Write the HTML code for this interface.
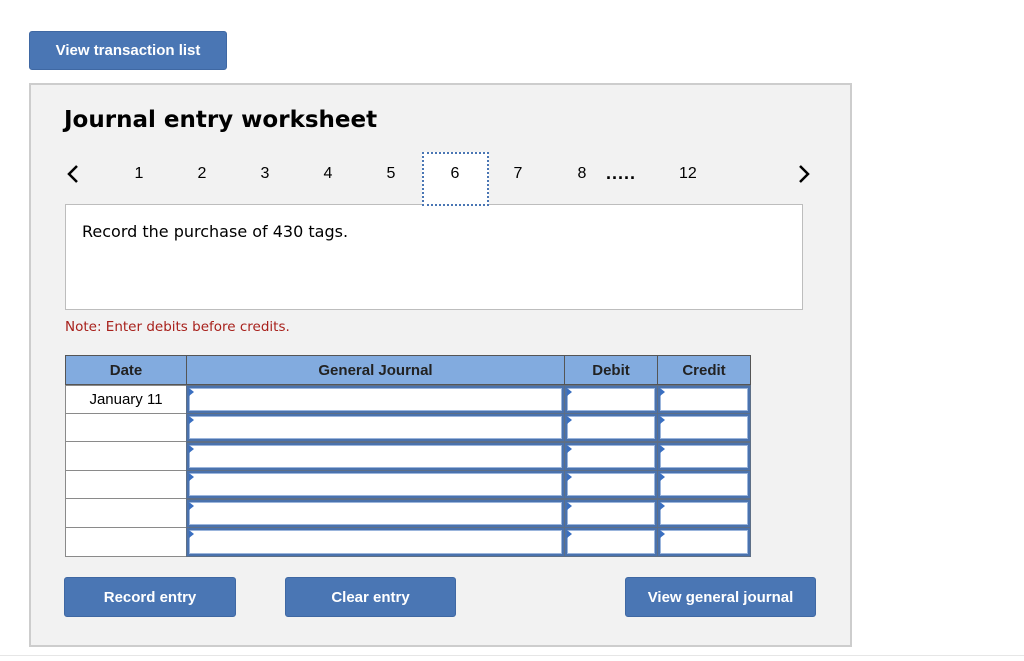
<!DOCTYPE html>
<html><head><meta charset="utf-8"><style>
*{box-sizing:border-box;margin:0;padding:0}
body{width:1024px;height:661px;background:#fff;position:relative;overflow:hidden;font-family:"Liberation Sans",Arial,sans-serif;color:#000}
.a{position:absolute}
.btn{position:absolute;background:#4a76b4;color:#fff;font-weight:bold;font-size:15px;border-radius:3px;display:flex;align-items:center;justify-content:center;border:1px solid #3f68a3}
.num{position:absolute;top:165px;font-size:16px;width:20px;text-align:center}
.dc{position:absolute;left:65px;width:122px;background:#fff;border:1px solid #8a8a8a;font-size:15px;display:flex;align-items:center;justify-content:center}
.ic{position:absolute;background:#fff;border:2px solid #4a72ad;box-shadow:inset 0 0 0 1px #9bb5dc}
.ic:before{content:"";position:absolute;left:0;top:0;border-left:5px solid #3a6fc0;border-top:4px solid transparent;border-bottom:4px solid transparent}
.hd{position:absolute;top:355px;height:30px;background:#82abdf;font-weight:bold;font-size:15px;display:flex;align-items:center;justify-content:center;border:1px solid #555;color:#222}
</style></head><body>
<div class="btn" style="left:29px;top:31px;width:198px;height:39px">View transaction list</div>
<div class="a" style="left:29px;top:83px;width:823px;height:564px;background:#f2f2f2;border:2px solid #cdcdcd"></div>
<div class="a" style="left:0;top:655px;width:1024px;height:1px;background:#e6e6e6"></div>
<div class="a" style="left:64px;top:107px;font-family:'DejaVu Sans',Verdana,sans-serif;font-weight:bold;font-size:23px">Journal entry worksheet</div>
<svg class="a" style="left:66px;top:164px" width="14" height="20"><path d="M11 2 L3 10 L11 18" stroke="#000" stroke-width="2.5" fill="none"/></svg>
<svg class="a" style="left:797px;top:164px" width="14" height="20"><path d="M3 2 L11 10 L3 18" stroke="#000" stroke-width="2.5" fill="none"/></svg>
<div class="a" style="left:65px;top:204px;width:738px;height:106px;background:#fff;border:1px solid #bdbdbd"></div>
<div class="a" style="left:422px;top:152px;width:67px;height:54px;background:#fff;border:2px dotted #4a76b4"></div>
<div class="num" style="left:129px">1</div>
<div class="num" style="left:192px">2</div>
<div class="num" style="left:255px">3</div>
<div class="num" style="left:318px">4</div>
<div class="num" style="left:381px">5</div>
<div class="num" style="left:445px">6</div>
<div class="num" style="left:508px">7</div>
<div class="num" style="left:572px">8</div>
<div class="a" style="left:606px;top:163px;font-size:18px;font-weight:bold;letter-spacing:1px">.....</div>
<div class="a" style="left:679px;top:165px;font-size:16px">12</div>
<div class="a" style="left:82px;top:222px;font-family:'DejaVu Sans',Verdana,sans-serif;font-size:16px">Record the purchase of 430 tags.</div>
<div class="a" style="left:65px;top:319px;font-family:'DejaVu Sans',Verdana,sans-serif;font-size:13.5px;color:#a8211c">Note: Enter debits before credits.</div>
<div class="hd" style="left:65px;width:122px">Date</div>
<div class="hd" style="left:186px;width:379px">General Journal</div>
<div class="hd" style="left:564px;width:94px">Debit</div>
<div class="hd" style="left:657px;width:94px">Credit</div>
<div class="dc" style="top:385px;height:29px">January 11</div>
<div class="dc" style="top:413px;height:29px"></div>
<div class="dc" style="top:441px;height:30px"></div>
<div class="dc" style="top:470px;height:29px"></div>
<div class="dc" style="top:498px;height:30px"></div>
<div class="dc" style="top:527px;height:30px"></div>
<div class="a" style="left:186px;top:385px;width:565px;height:172px;background:#5e6f86"></div>
<div class="ic" style="left:187px;top:386px;width:377px;height:27px"></div><div class="ic" style="left:565px;top:386px;width:92px;height:27px"></div><div class="ic" style="left:658px;top:386px;width:92px;height:27px"></div>
<div class="ic" style="left:187px;top:414px;width:377px;height:27px"></div><div class="ic" style="left:565px;top:414px;width:92px;height:27px"></div><div class="ic" style="left:658px;top:414px;width:92px;height:27px"></div>
<div class="ic" style="left:187px;top:443px;width:377px;height:27px"></div><div class="ic" style="left:565px;top:443px;width:92px;height:27px"></div><div class="ic" style="left:658px;top:443px;width:92px;height:27px"></div>
<div class="ic" style="left:187px;top:471px;width:377px;height:27px"></div><div class="ic" style="left:565px;top:471px;width:92px;height:27px"></div><div class="ic" style="left:658px;top:471px;width:92px;height:27px"></div>
<div class="ic" style="left:187px;top:500px;width:377px;height:27px"></div><div class="ic" style="left:565px;top:500px;width:92px;height:27px"></div><div class="ic" style="left:658px;top:500px;width:92px;height:27px"></div>
<div class="ic" style="left:187px;top:528px;width:377px;height:28px"></div><div class="ic" style="left:565px;top:528px;width:92px;height:28px"></div><div class="ic" style="left:658px;top:528px;width:92px;height:28px"></div>
<div class="btn" style="left:64px;top:577px;width:172px;height:40px">Record entry</div>
<div class="btn" style="left:285px;top:577px;width:171px;height:40px">Clear entry</div>
<div class="btn" style="left:625px;top:577px;width:191px;height:40px">View general journal</div>
</body></html>
